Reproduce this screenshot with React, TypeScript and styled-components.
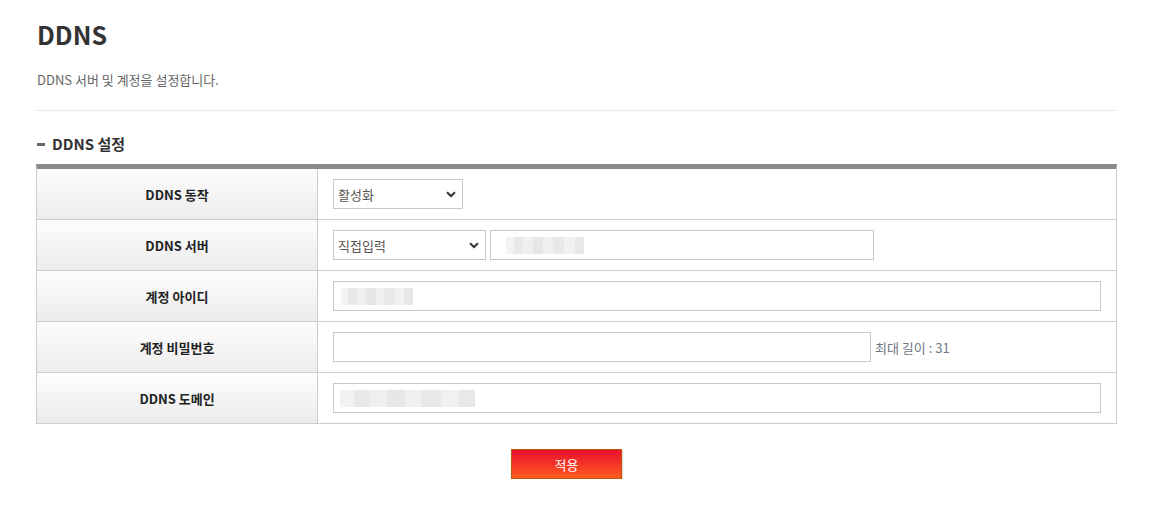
import React from "react";
import styled, { createGlobalStyle } from "styled-components";

const Global = createGlobalStyle`
  html, body { margin: 0; padding: 0; background: #fff; }
  body { font-family: "Noto Sans CJK KR", "Noto Sans", sans-serif; color: #333; }
  * { box-sizing: border-box; }
`;

const Page = styled.div`
  width: 1162px;
  padding: 14px 45px 0 36px;
`;

const Title = styled.h1`
  margin: 0;
  font-size: 25px;
  line-height: 40px;
  font-weight: 700;
  color: #333;
  padding-left: 1px;
`;

const Desc = styled.p`
  margin: 16px 0 0;
  font-size: 13px;
  line-height: 20px;
  color: #666;
  padding-left: 1px;
`;

const Divider = styled.hr`
  border: 0;
  border-top: 1px solid #e9e9e9;
  margin: 20px 0 0;
`;

const SectionTitle = styled.h2`
  margin: 22px 0 0;
  display: flex;
  align-items: center;
  gap: 7px;
  font-size: 15px;
  line-height: 22px;
  font-weight: 700;
  color: #333;
  padding-left: 1px;
  &::before {
    content: "";
    width: 8px;
    height: 3px;
    background: #666;
  }
`;

const Table = styled.div`
  margin-top: 9px;
  border-top: 5px solid #8a8a8a;
  border-left: 1px solid #ccc;
  border-right: 1px solid #ccc;
  display: grid;
  grid-template-columns: 281px 1fr;
`;

const Label = styled.div`
  height: 51px;
  display: flex;
  align-items: center;
  justify-content: center;
  border-bottom: 1px solid #ccc;
  border-right: 1px solid #ccc;
  background: linear-gradient(#fdfdfd, #ececec);
  font-size: 13px;
  font-weight: 700;
  color: #222;
`;

const Value = styled.div`
  height: 51px;
  display: flex;
  align-items: center;
  gap: 4px;
  padding: 0 15px;
  border-bottom: 1px solid #ccc;
`;

const Select = styled.div<{ $w: number }>`
  width: ${(p) => p.$w}px;
  height: 30px;
  border: 1px solid #c8c8c8;
  display: flex;
  align-items: center;
  justify-content: space-between;
  padding: 0 6px 0 4px;
  font-size: 13px;
  color: #555;
  background: #fff;
`;

const Input = styled.div<{ $w?: number }>`
  width: ${(p) => (p.$w ? `${p.$w}px` : "100%")};
  flex: ${(p) => (p.$w ? "none" : "1")};
  height: 30px;
  border: 1px solid #c8c8c8;
  display: flex;
  align-items: center;
  padding: 0 6px;
  background: #fff;
`;

const Blur = styled.span<{ $w: number }>`
  display: block;
  width: ${(p) => p.$w}px;
  height: 17px;
  background:
    linear-gradient(90deg, #f1f1f2 0 10%, #e6e6e8 10% 22%, #ededee 22% 35%, #e4e4e7 35% 48%, #eeeeef 48% 60%, #e6e6e9 60% 75%, #efeff0 75% 88%, #e5e5e8 88%);
  opacity: 0.9;
`;

const Hint = styled.span`
  font-size: 13px;
  color: #6b7785;
`;

const Chevron = () => (
  <svg width="10" height="7" viewBox="0 0 10 7">
    <path d="M1 1.2 L5 5 L9 1.2" stroke="#333" strokeWidth="2" fill="none" />
  </svg>
);

const ButtonRow = styled.div`
  display: flex;
  justify-content: center;
  margin-top: 25px;
`;

const Button = styled.button`
  width: 111px;
  height: 30px;
  border: 1px solid #c0580c;
  background: linear-gradient(#e8102e, #ff5a1f);
  color: #fff;
  font-family: inherit;
  font-size: 13px;
  padding: 0;
  box-shadow: 1px 1px 1px rgba(0, 0, 0, 0.15);
  margin-right: 20px;
`;

export default function App() {
  return (
    <Page>
      <Global />
      <Title>DDNS</Title>
      <Desc>DDNS 서버 및 계정을 설정합니다.</Desc>
      <Divider />
      <SectionTitle>DDNS 설정</SectionTitle>
      <Table>
        <Label>DDNS 동작</Label>
        <Value>
          <Select $w={130}>
            <span>활성화</span>
            <Chevron />
          </Select>
        </Value>
        <Label>DDNS 서버</Label>
        <Value>
          <Select $w={153}>
            <span>직접입력</span>
            <Chevron />
          </Select>
          <Input $w={384}>
            <Blur $w={78} style={{ marginLeft: 9 }} />
          </Input>
        </Value>
        <Label>계정 아이디</Label>
        <Value>
          <Input>
            <Blur $w={72} style={{ marginLeft: 1 }} />
          </Input>
        </Value>
        <Label>계정 비밀번호</Label>
        <Value>
          <Input $w={538} />
          <Hint>최대 길이 : 31</Hint>
        </Value>
        <Label>DDNS 도메인</Label>
        <Value>
          <Input>
            <Blur $w={135} />
          </Input>
        </Value>
      </Table>
      <ButtonRow>
        <Button>적용</Button>
      </ButtonRow>
    </Page>
  );
}
